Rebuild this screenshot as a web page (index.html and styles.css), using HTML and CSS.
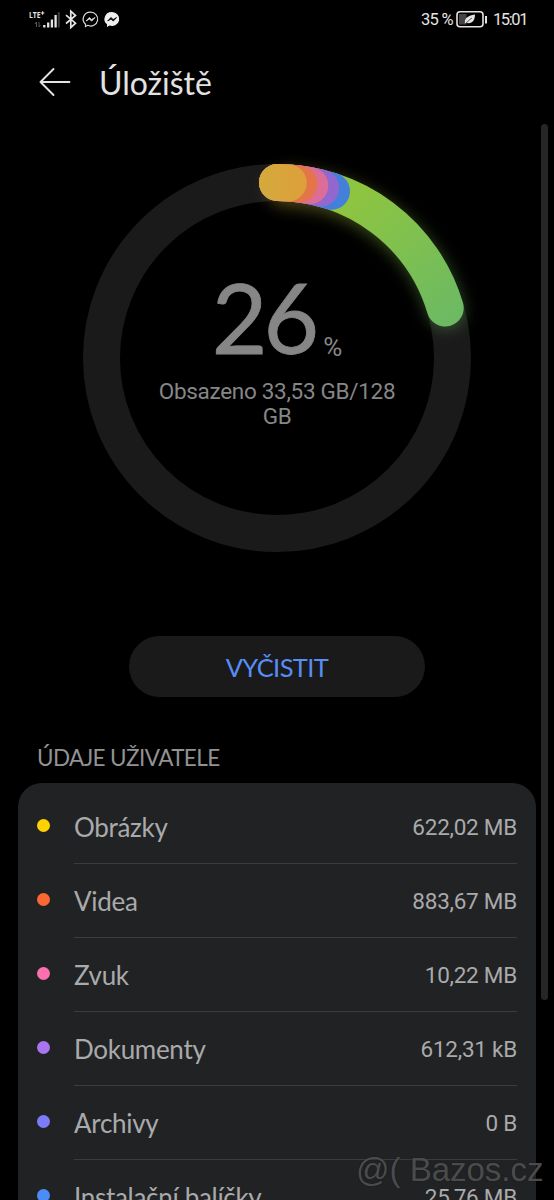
FILE: index.html
```html
<!DOCTYPE html>
<html lang="cs">
<head>
<meta charset="utf-8">
<title>Úložiště</title>
<link rel="stylesheet" href="styles.css">
</head>
<body>
<div class="screen">
  <div class="statusbar">
    <svg class="status-icons" width="94" height="24" viewBox="0 0 94 24">
      <text class="lte" x="0" y="10" textLength="11.500" lengthAdjust="spacingAndGlyphs">LTE</text>
      <path d="M11.800 5h3.600M13.600 3.200v3.600" stroke="#e4e4e4" stroke-width="1.100"/>
      <path d="M7.500 19v-5l-1.500 2M10 14v5l1.500-2" stroke="#555" fill="none"/>
      <path d="M15.300 17v2.500M19.200 14.500v5M22.900 11.500v8M26.600 7v12.500" stroke="#e4e4e4" stroke-width="2.300"/>
      <path d="M29.800 4v15.500" stroke="#3c3c3c" stroke-width="2"/>
      <path d="M37 7.200l9.500 8-4.700 4.300V3.200L46.500 7.500 37 15.500" stroke="#e4e4e4" stroke-width="1.700" fill="none"/>
      <path d="M61.300 4.200a7 6.900 0 0 0-4.800 12v2.300l2.200-1.200A7 6.900 0 1 0 61.300 4.200z" stroke="#d8d8d8" stroke-width="1.200" fill="none"/>
      <path d="M57.100 13l3.200-3.500 2.300 2 3.400-2-3.300 3.600-2.300-2z" fill="#e4e4e4" stroke="#e4e4e4" stroke-width=".8"/>
      <path d="M83 4a7.300 7 0 0 0-5 12.300v2.700l2.500-1.400A7.300 7 0 1 0 83 4z" fill="#efefef"/>
      <path d="M78.700 13l3.200-3.500 2.300 2 3.400-2-3.300 3.600-2.300-2z" fill="#050505" stroke="#050505" stroke-width=".8"/>
    </svg>
    <div class="status-right">
      <span class="percent">35 %</span>
      <svg class="battery" width="32" height="18" viewBox="0 0 32 18">
        <rect x="1" y="1.800" width="26" height="15" rx="3" fill="none" stroke="#e4e4e4" stroke-width="1.600"/>
        <rect x="3" y="4" width="7.500" height="10.500" fill="#444"/>
        <path d="M9 14c-1-5 2-8.500 10-9.500 0 6-3 10-9 8.300z" fill="#e4e4e4"/>
        <path d="M9 14.500c2-2.500 4-4.500 7-6.500" stroke="#333" stroke-width=".8" fill="none"/>
        <path d="M30 6v7.500" stroke="#e4e4e4" stroke-width="2"/>
      </svg>
      <span class="clock">15:01</span>
    </div>
  </div>

  <header class="header">
    <svg class="back" width="32" height="30" viewBox="0 0 32 30">
      <path d="M30.500 15H1.500M14.500 2l-13 13 13 13" fill="none" stroke="#e2e2e2" stroke-width="1.900" stroke-linejoin="round" stroke-linecap="round"/>
    </svg>
    <h1 class="title">Úložiště</h1>
  </header>

  <section class="gauge">
    <svg class="ring" width="434" height="434" viewBox="0 0 434 434">
      <defs>
        <linearGradient id="used" gradientUnits="userSpaceOnUse" x1="285" y1="60" x2="385" y2="180">
          <stop offset="0" stop-color="#8ec540"/>
          <stop offset="1" stop-color="#6dba62"/>
        </linearGradient>
        <linearGradient id="glow-fill" gradientUnits="userSpaceOnUse" x1="217" y1="40" x2="385" y2="180">
          <stop offset="0" stop-color="#d6a53a"/>
          <stop offset=".5" stop-color="#8ec540"/>
          <stop offset="1" stop-color="#6dba62"/>
        </linearGradient>
        <linearGradient id="images" gradientUnits="userSpaceOnUse" x1="198" y1="0" x2="247" y2="0">
          <stop offset="0" stop-color="#d3aa3d"/>
          <stop offset="1" stop-color="#de9f39"/>
        </linearGradient>
        <filter id="blur" x="-40%" y="-50%" width="180%" height="200%"><feGaussianBlur stdDeviation="8"/></filter>
      </defs>
      <circle cx="217" cy="217" r="175.500" fill="none" stroke="#1a1a1a" stroke-width="37"/>
      <g class="arcs">
        <path class="glow" d="M226 47A172 172 0 0 1 386 169" stroke="url(#glow-fill)" filter="url(#blur)"/>
        <path d="M217.500 41.500A175.500 175.500 0 0 1 385.200 167" stroke="url(#used)"/>
        <path d="M217.500 41.500A175.500 175.500 0 0 1 271.500 50.200" stroke="#457fdc"/>
        <path d="M217.500 41.500A175.500 175.500 0 0 1 260.600 47" stroke="#9268cf"/>
        <path d="M217.500 41.500A175.500 175.500 0 0 1 249.800 44.600" stroke="#dc6d98"/>
        <path d="M217.500 41.500A175.500 175.500 0 0 1 239 42.900" stroke="#e47548"/>
        <path d="M217.500 41.500A175.500 175.500 0 0 1 228.300 41.900" stroke="url(#images)"/>
      </g>
    </svg>
    <div class="readout">
      <div class="figure"><span class="number">26</span><span class="unit">%</span></div>
      <div class="detail">Obsazeno 33,53 GB/128 GB</div>
    </div>
  </section>

  <button class="clean">VYČISTIT</button>

  <h2 class="section-title">ÚDAJE UŽIVATELE</h2>
  <ul class="card">
    <li class="row"><i class="dot yellow"></i><div class="line"><span class="name">Obrázky</span><span class="size">622,02 MB</span></div></li>
    <li class="row"><i class="dot orange"></i><div class="line"><span class="name">Videa</span><span class="size">883,67 MB</span></div></li>
    <li class="row"><i class="dot pink"></i><div class="line"><span class="name">Zvuk</span><span class="size">10,22 MB</span></div></li>
    <li class="row"><i class="dot purple"></i><div class="line"><span class="name">Dokumenty</span><span class="size">612,31 kB</span></div></li>
    <li class="row"><i class="dot indigo"></i><div class="line"><span class="name">Archivy</span><span class="size">0 B</span></div></li>
    <li class="row"><i class="dot blue"></i><div class="line"><span class="name">Instalační balíčky</span><span class="size">25,76 MB</span></div></li>
  </ul>

  <div class="scrollbar"></div>
  <div class="watermark">@( Bazos.cz</div>
</div>
</body>
</html>
```

FILE: styles.css
```css
* { box-sizing: border-box; }

html, body {
  margin: 0;
  background: #000;
}

.screen {
  position: relative;
  width: 554px;
  height: 1200px;
  overflow: hidden;
  background: #000;
  color: #a9aaab;
  font-family: Lato, "Noto Sans", sans-serif;
}

.statusbar {
  display: flex;
  justify-content: space-between;
  height: 40px;
  padding: 8px 29px 0 29px;
  color: #e4e4e4;
}

.lte {
  font: 700 9.5px "Open Sans", sans-serif;
  fill: #e4e4e4;
}

.status-right {
  display: flex;
  align-items: flex-start;
  height: 24px;
  font: 400 16.5px/24px Roboto, sans-serif;
}

.percent { width: 35px; letter-spacing: -0.7px; white-space: nowrap; }
.battery { margin: 2px 5px 0 0; }
.clock { width: 32px; letter-spacing: -1.4px; white-space: nowrap; }

.header {
  display: flex;
  align-items: center;
  height: 84px;
  padding-left: 39px;
  gap: 28px;
}

.title {
  margin: 2px 0 0;
  font-size: 32px;
  font-weight: 400;
  line-height: 40px;
  color: #e2e2e2;
}

.gauge {
  display: grid;
  height: 512px;
  padding-top: 17px;
  justify-content: center;
}

.ring, .readout { grid-area: 1 / 1; }

.arcs { fill: none; stroke-width: 37px; stroke-linecap: round; }
.glow { opacity: .4; }

.readout {
  display: flex;
  flex-direction: column;
  align-items: center;
  padding-top: 118px;
  text-align: center;
  color: #868686;
}

.figure {
  display: flex;
  align-items: baseline;
  justify-content: center;
  height: 120px;
  line-height: 115px;
}

.number { font-size: 96px; font-weight: 400; -webkit-text-stroke: .8px #868686; letter-spacing: -4px; }
.unit { font: 400 26px Roboto, sans-serif; margin-left: 8px; position: relative; top: 2px; }

.detail {
  width: 245px;
  font: 400 22.5px/25px Roboto, sans-serif;
  letter-spacing: -.3px;
}

.clean {
  display: block;
  width: 296px;
  height: 61px;
  margin: 0 0 0 129px;
  padding: 0;
  border: 0;
  border-radius: 31px;
  background: #1a1a1a;
  color: #578df5;
  font: 400 25.5px Lato, sans-serif;
  letter-spacing: -.6px;
}

.section-title {
  margin: 47px 0 0 37px;
  height: 39px;
  font-size: 22.5px;
  font-weight: 400;
  line-height: 28px;
  letter-spacing: -.6px;
  color: #929292;
}

.card {
  margin: 0 18px;
  padding: 7px 19px 0 18px;
  height: 440px;
  list-style: none;
  border-radius: 24px 24px 0 0;
  background: #212224;
}

.row { display: flex; height: 74px; }

.dot {
  width: 13px;
  height: 13px;
  margin: 29px 24px 0 1px;
  border-radius: 50%;
  flex: none;
}

.yellow { background: #ffd200; }
.orange { background: #fb6833; }
.pink { background: #fb70ae; }
.purple { background: #aa74ee; }
.indigo { background: #7c7bf8; }
.blue { background: #4a8df8; }

.line {
  display: flex;
  flex: 1;
  justify-content: space-between;
  align-items: center;
  border-bottom: 1px solid #3b3c3e;
}

.name { font-size: 26px; letter-spacing: -.3px; }
.size { font: 400 22.5px Roboto, sans-serif; letter-spacing: -.25px; }

.scrollbar {
  position: absolute;
  left: 541px;
  top: 124px;
  width: 7px;
  height: 876px;
  border-radius: 4px;
  background: #262626;
}

.watermark {
  position: absolute;
  left: 356px;
  top: 1150px;
  font: 400 33px/40px "Liberation Sans", sans-serif;
  color: rgba(110, 110, 112, .65);
  text-shadow: 0 0 1px #111;
  white-space: nowrap;
}
```
